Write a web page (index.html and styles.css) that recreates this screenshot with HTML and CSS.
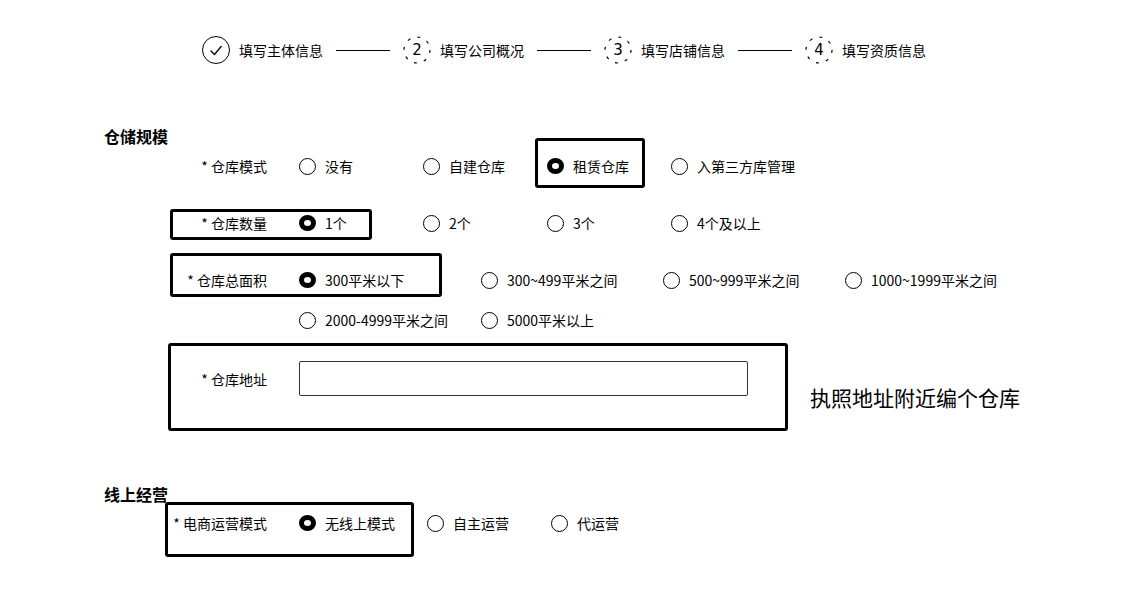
FILE: index.html
```html
<!DOCTYPE html>
<html lang="zh">
<head>
<meta charset="utf-8">
<title>仓储规模</title>
<link rel="stylesheet" href="styles.css">
</head>
<body>
<div class="page">
  <div class="stepper">
    <div class="step">
      <svg class="step-icon" width="28" height="28" viewBox="0 0 28 28"><circle cx="14" cy="14" r="13.5" fill="none" stroke="#000" stroke-width="1"/><path d="M8.5 14.5 L12.5 18.5 L19.5 10" fill="none" stroke="#000" stroke-width="1.3"/></svg>
      <span class="step-text">填写主体信息</span>
    </div>
    <span class="step-line"></span>
    <div class="step">
      <span class="step-num"><svg width="28" height="28" viewBox="0 0 28 28"><circle cx="14" cy="14" r="13" fill="none" stroke="#000" stroke-width="1.2" stroke-dasharray="3 7.2"/></svg><span class="num">2</span></span>
      <span class="step-text">填写公司概况</span>
    </div>
    <span class="step-line"></span>
    <div class="step">
      <span class="step-num"><svg width="28" height="28" viewBox="0 0 28 28"><circle cx="14" cy="14" r="13" fill="none" stroke="#000" stroke-width="1.2" stroke-dasharray="3 7.2"/></svg><span class="num">3</span></span>
      <span class="step-text">填写店铺信息</span>
    </div>
    <span class="step-line"></span>
    <div class="step">
      <span class="step-num"><svg width="28" height="28" viewBox="0 0 28 28"><circle cx="14" cy="14" r="13" fill="none" stroke="#000" stroke-width="1.2" stroke-dasharray="3 7.2"/></svg><span class="num">4</span></span>
      <span class="step-text">填写资质信息</span>
    </div>
  </div>

  <div class="section-title first">仓储规模</div>

  <div class="row r1">
    <span class="label">* 仓库模式</span>
    <span class="opt w124"><i class="radio"></i>没有</span>
    <span class="opt w124"><i class="radio"></i>自建仓库</span>
    <span class="opt w124"><i class="radio on"></i>租赁仓库</span>
    <span class="opt"><i class="radio"></i>入第三方库管理</span>
    <span class="mark m1"></span>
  </div>

  <div class="row r2">
    <span class="label">* 仓库数量</span>
    <span class="opt w124"><i class="radio on"></i>1个</span>
    <span class="opt w124"><i class="radio"></i>2个</span>
    <span class="opt w124"><i class="radio"></i>3个</span>
    <span class="opt"><i class="radio"></i>4个及以上</span>
    <span class="mark m2"></span>
  </div>

  <div class="row r3">
    <span class="label">* 仓库总面积</span>
    <span class="opt w182"><i class="radio on"></i>300平米以下</span>
    <span class="opt w182"><i class="radio"></i>300~499平米之间</span>
    <span class="opt w182"><i class="radio"></i>500~999平米之间</span>
    <span class="opt"><i class="radio"></i>1000~1999平米之间</span>
    <span class="mark m3"></span>
  </div>

  <div class="row r3b">
    <span class="label"></span>
    <span class="opt w182"><i class="radio"></i>2000-4999平米之间</span>
    <span class="opt"><i class="radio"></i>5000平米以上</span>
  </div>

  <div class="addr-wrap">
    <div class="addr-box">
      <span class="label addr-label">* 仓库地址</span>
      <input class="addr-input" type="text">
    </div>
    <div class="note">执照地址附近编个仓库</div>
  </div>

  <div class="section-title second">线上经营</div>

  <div class="row r5">
    <span class="label">* 电商运营模式</span>
    <span class="opt w128"><i class="radio on"></i>无线上模式</span>
    <span class="opt w124"><i class="radio"></i>自主运营</span>
    <span class="opt"><i class="radio"></i>代运营</span>
    <span class="mark m5"></span>
  </div>
</div>
</body>
</html>
```

FILE: styles.css
```css
* { box-sizing: border-box; }
html, body {
  margin: 0;
  padding: 0;
  background: #fff;
}
body {
  font-family: "Noto Sans CJK SC", "Noto Sans", sans-serif;
  color: #000;
  font-size: 14px;
}
.page {
  width: 1138px;
  height: 603px;
  overflow: hidden;
}

/* stepper */
.stepper {
  display: flex;
  align-items: center;
  height: 100px;
  padding-left: 202px;
}
.step {
  display: flex;
  align-items: center;
}
.step-icon { display: block; flex: none; }
.step-num {
  position: relative;
  width: 28px;
  height: 28px;
  flex: none;
}
.step-num svg { display: block; }
.num {
  position: absolute;
  left: 0;
  top: 0;
  width: 28px;
  line-height: 28px;
  text-align: center;
  font-family: "DejaVu Sans", sans-serif;
  font-size: 15px;
}
.step-text {
  margin-left: 9px;
  font-size: 14px;
  line-height: 20px;
  width: 84px;
  white-space: nowrap;
}
.step-line {
  width: 54px;
  height: 1px;
  background: #000;
  margin: 0 13px 0 13px;
}

/* section titles */
.section-title {
  padding-left: 104px;
  font-size: 16px;
  font-weight: bold;
  line-height: 20px;
  height: 20px;
}
.section-title.first { margin-top: 26px; }
.section-title.second { margin-top: 53px; }

/* rows */
.row {
  position: relative;
  display: flex;
  align-items: center;
  height: 40px;
}
.r2, .r3 { margin-top: 17px; }
.label {
  flex: none;
  width: 267px;
  margin-right: 32px;
  text-align: right;
  white-space: nowrap;
  font-size: 14px;
  line-height: 20px;
}
.opt {
  flex: none;
  display: flex;
  align-items: center;
  white-space: nowrap;
  font-size: 14px;
  line-height: 20px;
}
.w124 { width: 124px; }
.w128 { width: 128px; }
.w182 { width: 182px; }
.radio {
  flex: none;
  display: block;
  width: 17px;
  height: 17px;
  border: 1px solid #000;
  border-radius: 50%;
  margin-right: 9px;
}
.radio.on {
  width: 17px;
  height: 16px;
  border-width: 5px;
}

/* annotation rectangles drawn over the form */
.mark {
  position: absolute;
  border: 3px solid #000;
  border-radius: 3px;
  pointer-events: none;
}
.m1 { left: 535px; top: -8px; width: 110px; height: 50px; }
.m2 { left: 170px; top: 6px; width: 202px; height: 31px; }
.m3 { left: 170px; top: -7px; width: 272px; height: 44px; }
.m5 { left: 165px; top: -1px; width: 249px; height: 55px; }

/* address block */
.addr-wrap {
  display: flex;
  align-items: flex-start;
  margin-top: 3px;
  margin-left: 168px;
}
.addr-box {
  display: flex;
  align-items: center;
  width: 620px;
  height: 88px;
  border: 3px solid #000;
  border-radius: 3px;
  padding-top: 15px;
  padding-bottom: 32px;
}
.addr-label { width: 96px; }
.addr-input {
  width: 449px;
  height: 35px;
  border: 1px solid #333;
  border-radius: 2px;
  margin: 0;
  padding: 0 6px;
  outline: none;
  background: #fff;
}
.note {
  margin-left: 22px;
  margin-top: 41px;
  font-size: 21px;
  line-height: 26px;
  white-space: nowrap;
}

.r5 { margin-top: -1px; }
```
